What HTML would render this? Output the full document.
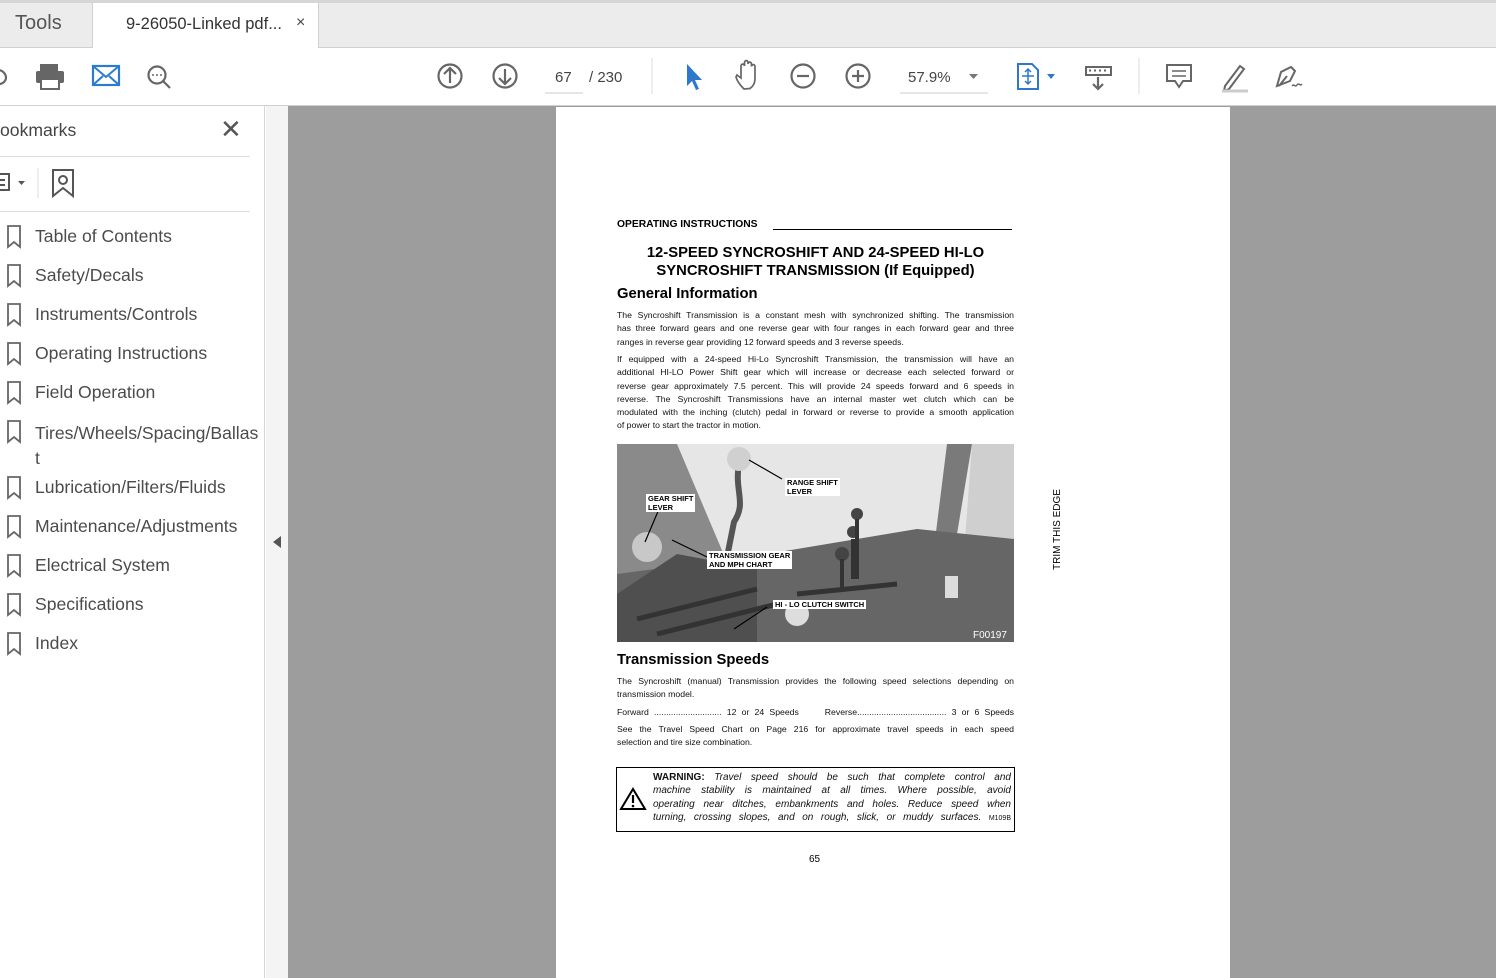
<!DOCTYPE html>
<html><head><meta charset="utf-8"><style>
*{margin:0;padding:0;box-sizing:border-box}
body{width:1496px;height:978px;overflow:hidden;background:#fff;font-family:"Liberation Sans",sans-serif;position:relative}
.abs{position:absolute}
.tabbar{left:0;top:0;width:1496px;height:48px;background:#ececec;border-top:3px solid #d6d6d6;border-bottom:1px solid #d0d0d0}
.toolbar{left:0;top:48px;width:1496px;height:58px;background:#fff;border-bottom:1px solid #d0d0d0}
.side{left:0;top:106px;width:265px;height:872px;background:#fff;border-right:1px solid #d6d6d6}
.split{left:266px;top:106px;width:22px;height:872px;background:#f4f4f4}
.view{left:288px;top:106px;width:1208px;height:872px;background:#9d9d9d}
.page{left:556px;top:107px;width:674px;height:871px;background:#fff}
.bm{position:absolute;left:35px;font-size:17.6px;color:#4b4b4b}
.pt{font-size:8.7px;color:#111;line-height:13.3px;position:absolute;left:617px;width:397px}
.pt div{text-align:justify;text-align-last:justify;height:13.3px;overflow:hidden}
.pt div.l{text-align-last:left}
.lbl{position:absolute;background:#fff;font-weight:bold;font-size:7.5px;line-height:9px;padding:0 2px;color:#000}
</style></head><body>
<div class="abs tabbar"></div>
<div class="abs" style="left:0;top:3px;width:93px;height:44px;background:#ececec;border-right:1px solid #d0d0d0"></div>
<div class="abs" style="left:15px;top:12px;font-size:20px;color:#555">Tools</div>
<div class="abs" style="left:93px;top:3px;width:226px;height:45px;background:#fff;border-right:1px solid #d0d0d0"></div>
<div class="abs" style="left:126px;top:15px;font-size:16.5px;color:#333">9-26050-Linked pdf...</div>
<div class="abs" style="left:296px;top:14px;font-size:16px;color:#444">×</div>
<div class="abs toolbar"></div>
<svg class="abs" style="left:0;top:48px" width="1496" height="58">
<g fill="none" stroke="#666" stroke-width="2.2">
<path d="M-2 22 a8 8 0 0 1 8 8 a7 7 0 0 1 -8 6"/>
<circle cx="157" cy="27" r="8.5"/><path d="M163 33 l7 7"/>
<circle cx="450" cy="28" r="11.5"/><path d="M450 35 V21 M444 26 l6-6 6 6"/>
<circle cx="505" cy="28" r="11.5"/><path d="M505 21 V35 M499 30 l6 6 6-6"/>
<circle cx="803" cy="28" r="11.5"/><path d="M797 28 h12"/>
<circle cx="858" cy="28" r="11.5"/><path d="M852 28 h12 M858 22 v12"/>
<path d="M744 41 c-3-3-7-8-8-12 l1-2 4 3 V18 c0-2.5 3.5-2.5 3.5 0 v-3.5 c0-2.5 3.5-2.5 3.5 0 v1.5 c0-2.5 3.5-2.5 3.5 0 v2.5 c0-2.5 3.5-2.5 3.5 0 v12 c0 5-2 8-5 10 z" stroke-width="1.7"/>
<rect x="1086" y="19" width="25" height="8" stroke-width="2"/><path d="M1098 29 v12 M1093 36 l5 5 5-5"/>
<path d="M1167 17 h24 v16 h-8 l-4 6 -4-6 h-8 z" stroke-width="2"/><path d="M1172 23 h14 M1172 28 h14" stroke-width="1.5"/>
<path d="M1225 38 l15-20 4 3 -15 20 -5 2 z" stroke-width="2"/>
<path d="M1277 38 l4-14 10-5 4 4 -5 10 z M1287 28 l-8 10" stroke-width="2"/><path d="M1292 38 c2-3 3 2 5-1 2-3 3 2 5-1" stroke-width="1.5"/>
</g>
<g fill="#666" stroke="none"><rect x="1089" y="21.5" width="2" height="2"/><rect x="1094" y="21.5" width="2" height="2"/><rect x="1099" y="21.5" width="2" height="2"/><rect x="1104" y="21.5" width="2" height="2"/></g>
<path d="M1222 43 h26" stroke="#ccc" stroke-width="3"/>
<g fill="#666"><rect x="40" y="16" width="18" height="7"/><rect x="36" y="23" width="28" height="12" rx="2"/><rect x="41" y="31" width="18" height="10" fill="#fff" stroke="#666" stroke-width="2"/></g>
<circle cx="153" cy="27" r="1" fill="#666"/><circle cx="157" cy="27" r="1" fill="#666"/><circle cx="161" cy="27" r="1" fill="#666"/>
<rect x="93" y="18" width="26" height="19" fill="none" stroke="#2b7bd0" stroke-width="2.2"/><path d="M93 18 l13 11 13-11 M93 37 l10-9 M119 37 l-10-9" fill="none" stroke="#2b7bd0" stroke-width="2"/>
<path d="M687 16 v22 l5-5 4 9 3-1 -4-9 7 0 z" fill="#2e78cc"/>
<path d="M1018 16 h14 l6 6 v19 h-20 z" fill="none" stroke="#2e78cc" stroke-width="2"/><path d="M1028 21 v15 M1022 28 h12 M1025 24 l3-3 3 3 M1025 33 l3 3 3-3" stroke="#2e78cc" stroke-width="1.5" fill="none"/>
<path d="M1047 26 h8 l-4 5 z" fill="#2e78cc"/>
<path d="M969 26 h9 l-4.5 5 z" fill="#777"/>
<path d="M652 10 v36 M1139 10 v36" stroke="#ddd"/>
<path d="M545 45 h38 M900 45 h88" stroke="#ccc"/>
<text x="555" y="34" font-size="15" fill="#444" font-family="Liberation Sans">67</text>
<text x="589" y="34" font-size="15" fill="#444" font-family="Liberation Sans">/  230</text>
<text x="908" y="34" font-size="15" fill="#444" font-family="Liberation Sans">57.9%</text>
</svg>
<div class="abs side"></div>
<div class="abs" style="left:0;top:120px;font-size:17.6px;color:#444">ookmarks</div>
<div class="abs" style="left:220px;top:114px;font-size:26px;color:#555">✕</div>
<div class="abs" style="left:0;top:156px;width:250px;height:1px;background:#ddd"></div>
<div class="abs" style="left:0;top:211px;width:250px;height:1px;background:#ddd"></div>
<svg class="abs" style="left:0;top:160px" width="90" height="45"><g fill="none" stroke="#555" stroke-width="2"><path d="M0 14 h9 v16 h-9 M0 20 h5 M0 25 h5"/><path d="M53 10 h20 v26 l-10-8 -10 8 z"/><circle cx="63" cy="20" r="4"/></g><path d="M18 21 h7 l-3.5 4 z" fill="#555"/><path d="M38 8 v30" stroke="#ddd"/></svg>
<svg class="abs" style="left:0;top:220px" width="30" height="440"><g fill="none" stroke="#666" stroke-width="1.8">
<path d="M8 6 h12 v21 l-6-5 -6 5 z"/><path d="M8 45 h12 v21 l-6-5 -6 5 z"/><path d="M8 84 h12 v21 l-6-5 -6 5 z"/><path d="M8 123 h12 v21 l-6-5 -6 5 z"/><path d="M8 162 h12 v21 l-6-5 -6 5 z"/><path d="M8 201 h12 v21 l-6-5 -6 5 z"/><path d="M8 257 h12 v21 l-6-5 -6 5 z"/><path d="M8 296 h12 v21 l-6-5 -6 5 z"/><path d="M8 335 h12 v21 l-6-5 -6 5 z"/><path d="M8 374 h12 v21 l-6-5 -6 5 z"/><path d="M8 413 h12 v21 l-6-5 -6 5 z"/></g></svg>
<div class="bm" style="top:226px">Table of Contents</div>
<div class="bm" style="top:265px">Safety/Decals</div>
<div class="bm" style="top:304px">Instruments/Controls</div>
<div class="bm" style="top:343px">Operating Instructions</div>
<div class="bm" style="top:382px">Field Operation</div>
<div class="bm" style="top:421px;line-height:25px;width:230px;white-space:nowrap">Tires/Wheels/Spacing/Ballas<br>t</div>
<div class="bm" style="top:477px">Lubrication/Filters/Fluids</div>
<div class="bm" style="top:516px">Maintenance/Adjustments</div>
<div class="bm" style="top:555px">Electrical System</div>
<div class="bm" style="top:594px">Specifications</div>
<div class="bm" style="top:633px">Index</div>
<div class="abs split"></div>
<svg class="abs" style="left:272px;top:535px" width="10" height="14"><path d="M9 1 v12 l-8-6 z" fill="#555"/></svg>
<div class="abs view"></div>
<div class="abs page"></div>
<div class="abs" style="left:617px;top:219px;font-size:10.3px;font-weight:bold;color:#000">OPERATING INSTRUCTIONS</div>
<div class="abs" style="left:773px;top:229px;width:239px;height:1px;background:#000"></div>
<div class="abs" style="left:617px;top:244px;width:397px;text-align:center;font-size:14.8px;font-weight:bold;line-height:18px;color:#000">12-SPEED SYNCROSHIFT AND 24-SPEED HI-LO<br>SYNCROSHIFT TRANSMISSION (If Equipped)</div>
<div class="abs" style="left:617px;top:286px;font-size:14.8px;font-weight:bold;color:#000">General Information</div>
<div class="pt" style="top:309px">
<div>The Syncroshift Transmission is a constant mesh with synchronized shifting. The transmission</div>
<div>has three forward gears and one reverse gear with four ranges in each forward gear and three</div>
<div class="l">ranges in reverse gear providing 12 forward speeds and 3 reverse speeds.</div></div>
<div class="pt" style="top:353px">
<div>If equipped with a 24-speed Hi-Lo Syncroshift Transmission, the transmission will have an</div>
<div>additional HI-LO Power Shift gear which will increase or decrease each selected forward or</div>
<div>reverse gear approximately 7.5 percent. This will provide 24 speeds forward and 6 speeds in</div>
<div>reverse. The Syncroshift Transmissions have an internal master wet clutch which can be</div>
<div>modulated with the inching (clutch) pedal in forward or reverse to provide a smooth application</div>
<div class="l">of power to start the tractor in motion.</div></div>
<svg class="abs" style="left:617px;top:444px" width="397" height="198">
<rect width="397" height="198" fill="#e6e6e6"/>
<path d="M0 0 h60 l55 130 -115 10 z" fill="#8a8a8a"/>
<path d="M330 0 h25 l-20 120 h-20 z" fill="#7a7a7a"/>
<path d="M355 0 h42 v110 h-50 z" fill="#cfcfcf"/>
<path d="M0 130 l150 -20 150 -25 97 10 v103 h-397 z" fill="#666"/>
<path d="M0 150 l60 -40 80 15 v73 h-140 z" fill="#4f4f4f"/>
<path d="M20 175 l120 -30 M40 190 l120 -30 M180 150 l100 -10" stroke="#333" stroke-width="5"/>
<path d="M122 18 c-5 30 8 40 -5 60 l-8 40" stroke="#555" stroke-width="6" fill="none"/>
<circle cx="122" cy="15" r="12" fill="#d0d0d0"/>
<circle cx="30" cy="103" r="15" fill="#c8c8c8"/>
<circle cx="240" cy="70" r="6" fill="#444"/><circle cx="236" cy="88" r="6" fill="#444"/><circle cx="225" cy="110" r="7" fill="#444"/>
<path d="M240 75 v60 M236 95 v40 M225 115 v30" stroke="#333" stroke-width="4"/>
<rect x="328" y="132" width="13" height="22" fill="#ddd"/>
<circle cx="180" cy="170" r="12" fill="#ddd"/>
<g stroke="#000" stroke-width="1.2" fill="#000"><path d="M165 35 L132 16"/><path d="M45 58 L28 98"/><path d="M90 113 L55 96"/><path d="M150 163 L117 185"/></g>
<text x="356" y="194" font-size="10" fill="#fff" font-family="Liberation Sans">F00197</text>
</svg>
<div class="lbl" style="left:785px;top:478px">RANGE SHIFT<br>LEVER</div>
<div class="lbl" style="left:646px;top:494px">GEAR SHIFT<br>LEVER</div>
<div class="lbl" style="left:707px;top:551px">TRANSMISSION GEAR<br>AND MPH CHART</div>
<div class="lbl" style="left:773px;top:600px">HI - LO CLUTCH SWITCH</div>
<div class="abs" style="left:617px;top:652px;font-size:14.8px;font-weight:bold;color:#000">Transmission Speeds</div>
<div class="pt" style="top:675px">
<div>The Syncroshift (manual) Transmission provides the following speed selections depending on</div>
<div class="l">transmission model.</div></div>
<div class="pt" style="top:706px"><div>Forward ............................ 12 or 24 Speeds &nbsp; &nbsp; Reverse..................................... 3 or 6 Speeds</div></div>
<div class="pt" style="top:723px">
<div>See the Travel Speed Chart on Page 216 for approximate travel speeds in each speed</div>
<div class="l">selection and tire size combination.</div></div>
<div class="abs" style="left:616px;top:767px;width:399px;height:65px;border:1.3px solid #000"></div>
<svg class="abs" style="left:619px;top:787px" width="28" height="24"><path d="M14 2 L26 22 H2 z" fill="none" stroke="#000" stroke-width="2"/><path d="M14 8 v8" stroke="#000" stroke-width="2.2"/><circle cx="14" cy="19" r="1.3"/></svg>
<div class="pt" style="left:653px;width:358px;top:771px;font-style:italic;font-size:10px">
<div><b style="font-style:normal">WARNING:</b> Travel speed should be such that complete control and</div>
<div>machine stability is maintained at all times. Where possible, avoid</div>
<div>operating near ditches, embankments and holes. Reduce speed when</div>
<div>turning, crossing slopes, and on rough, slick, or muddy surfaces. <span style="font-style:normal;font-size:7px">M109B</span></div></div>
<div class="abs" style="left:809px;top:854px;font-size:10px;color:#000">65</div>
<div class="abs" style="left:1052px;top:570px;font-size:10px;color:#000;transform:rotate(-90deg);transform-origin:0 0;white-space:nowrap">TRIM THIS EDGE</div>
</body></html>
